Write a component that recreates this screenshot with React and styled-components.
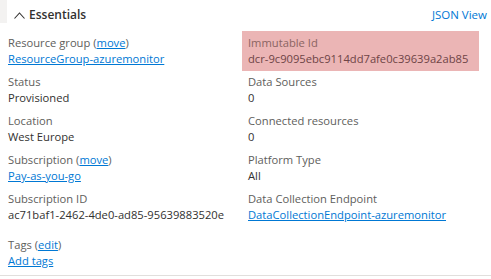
import React from "react";
import styled, { createGlobalStyle } from "styled-components";

const Global = createGlobalStyle`
  html, body { margin: 0; padding: 0; background: #ffffff; }
  body { font-family: "Open Sans", "Noto Sans", sans-serif; }
`;

const Panel = styled.div`
  width: 491px;
  height: 279px;
  box-sizing: border-box;
  overflow: hidden;
  font-size: 11.2px;
  line-height: 16px;
  color: #323130;
`;

const Header = styled.div`
  display: flex;
  align-items: flex-start;
  height: 31px;
`;

const Strip = styled.div`
  width: 7px;
  height: 23px;
  background: #f3f2f1;
  flex: none;
`;

const Toggle = styled.div`
  display: flex;
  align-items: center;
  gap: 4px;
  margin-left: 7px;
  height: 30px;
  font-size: 12px;
  font-weight: 600;
  color: #323130;
`;

const HeaderLink = styled.a`
  margin-left: auto;
  margin-right: 4px;
  height: 30px;
  display: flex;
  align-items: center;
  font-size: 11.5px;
  color: #0078d4;
  text-decoration: none;
`;

const Body = styled.div`
  padding: 4px 0 6px 8px;
  border-bottom: 1px solid #e1dfdd;
`;

const Grid = styled.div`
  display: grid;
  grid-template-columns: 240px 1fr;
  row-gap: 7px;
`;

const Item = styled.div`
  display: flex;
  flex-direction: column;
  ${(p) =>
    p.$highlight &&
    `
    margin: -4px 0 -4px -6px;
    padding: 4px 6px;
    width: 237px;
    box-sizing: border-box;
    background: #ebb5b5;
  `}
`;

const Label = styled.div`
  color: ${(p) => (p.$highlight ? "#8a6462" : "#605e5c")};
  white-space: nowrap;
`;

const Value = styled.div`
  color: ${(p) => (p.$highlight ? "#6e4446" : "#323130")};
  white-space: nowrap;
`;

const Link = styled.a`
  color: #0078d4;
  text-decoration: underline;
  cursor: pointer;
`;

const Tags = styled(Item)`
  margin-top: 14px;
`;

const Chevron = () => (
  <svg width="11" height="7" viewBox="0 0 11 7" fill="none">
    <polyline points="0.5,6.5 5.5,1 10.5,6.5" stroke="#323130" strokeWidth="1.1" />
  </svg>
);

const left = [
  { label: <>Resource group (<Link>move</Link>)</>, value: <Link>ResourceGroup-azuremonitor</Link> },
  { label: "Status", value: "Provisioned" },
  { label: "Location", value: "West Europe" },
  { label: <>Subscription (<Link>move</Link>)</>, value: <Link>Pay-as-you-go</Link> },
  { label: "Subscription ID", value: "ac71baf1-2462-4de0-ad85-95639883520e" },
];

const right = [
  { label: "Immutable Id", value: "dcr-9c9095ebc9114dd7afe0c39639a2ab85", highlight: true },
  { label: "Data Sources", value: "0" },
  { label: "Connected resources", value: "0" },
  { label: "Platform Type", value: "All" },
  { label: "Data Collection Endpoint", value: <Link>DataCollectionEndpoint-azuremonitor</Link> },
];

export default function App() {
  return (
    <Panel>
      <Global />
      <Header>
        <Strip />
        <Toggle>
          <Chevron />
          <span>Essentials</span>
        </Toggle>
        <HeaderLink>JSON View</HeaderLink>
      </Header>
      <Body>
        <Grid>
          {left.map((l, i) => {
            const r = right[i];
            return (
              <React.Fragment key={i}>
                <Item>
                  <Label>{l.label}</Label>
                  <Value>{l.value}</Value>
                </Item>
                <Item $highlight={r.highlight}>
                  <Label $highlight={r.highlight}>{r.label}</Label>
                  <Value $highlight={r.highlight}>{r.value}</Value>
                </Item>
              </React.Fragment>
            );
          })}
        </Grid>
        <Tags>
          <Label>Tags (<Link>edit</Link>)</Label>
          <Value><Link>Add tags</Link></Value>
        </Tags>
      </Body>
    </Panel>
  );
}
